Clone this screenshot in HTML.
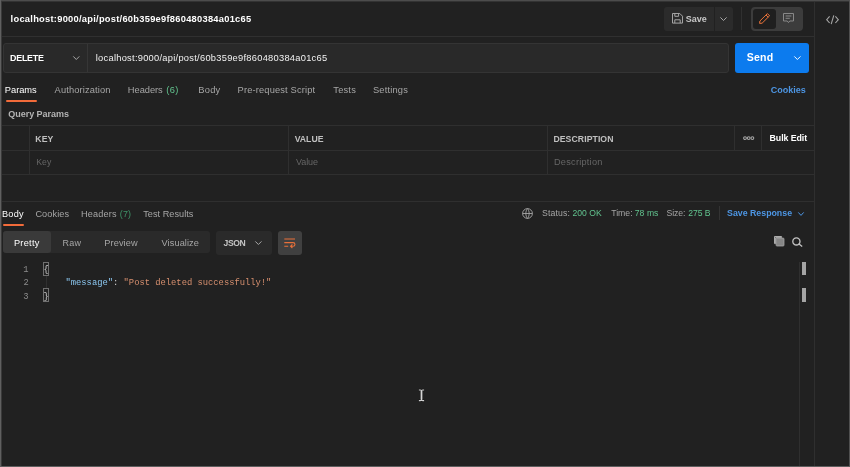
<!DOCTYPE html>
<html><head><meta charset="utf-8">
<style>
*{box-sizing:border-box;margin:0;padding:0}
html,body{width:850px;height:467px;overflow:hidden;background:#212121}
body{font-family:"Liberation Sans",sans-serif;font-size:9.5px;color:#a6a6a6;position:relative}
.abs{position:absolute}
.t{position:absolute;white-space:nowrap;line-height:12px}
.line{position:absolute;background:#2f2f2f}
svg{position:absolute;overflow:visible}
</style></head><body>
<!-- header -->
<div class="line" style="left:2px;top:35.5px;width:812px;height:1px;background:#303030"></div>
<!-- right sidebar -->
<div class="line" style="left:814px;top:1px;width:1px;height:465px"></div>
<svg style="left:826px;top:14.8px" width="13" height="9.4" viewBox="0 0 13 9.4" fill="none" stroke="#a6a6a6" stroke-width="1.1"><path d="M3.6 1.4 L0.7 4.7 L3.6 8 M9.4 1.4 L12.3 4.7 L9.4 8 M7.8 0.3 L5.2 9.1"/></svg>

<!-- save -->
<div class="abs" style="left:664px;top:7px;width:50px;height:23.5px;background:#2b2b2b;border-radius:3px 0 0 3px"></div>
<div class="abs" style="left:715px;top:7px;width:18px;height:23.5px;background:#2b2b2b;border-radius:0 3px 3px 0"></div>
<svg style="left:671.5px;top:13.4px" width="11" height="10.6" viewBox="0 0 11 10.6" fill="none" stroke="#a6a6a6" stroke-width="1"><path d="M0.5 0.5 H7.8 L10.5 3.2 V10.1 H0.5 Z M2.8 0.5 V3.3 H6.6 V0.5 M2.8 10.1 V6.8 H8.2 V10.1"/></svg>
<svg style="left:720.2px;top:17px" width="7" height="4" viewBox="0 0 7 4" fill="none" stroke="#a6a6a6" stroke-width="1"><path d="M0.4 0.4 L3.5 3.5 L6.6 0.4"/></svg>
<div class="line" style="left:741px;top:7px;width:1px;height:23px;background:#303030"></div>
<!-- toggle -->
<div class="abs" style="left:751px;top:7px;width:52px;height:24px;background:#3c3c3c;border-radius:4px"></div>
<div class="abs" style="left:753px;top:9px;width:23px;height:20px;background:#1f1f1f;border-radius:3px"></div>
<svg style="left:758.8px;top:13px" width="11.2" height="11" viewBox="0 0 11.2 11" fill="none" stroke="#ea7239" stroke-width="1"><path d="M0.6 10.4 L0.9 8 L8.4 0.6 L10.6 2.8 L3.1 10.2 Z M7 2 L9.2 4.2"/></svg>
<svg style="left:783px;top:13.3px" width="11" height="10.2" viewBox="0 0 11 10.2" fill="none" stroke="#8a8a8a" stroke-width="1"><path d="M0.5 0.5 H10.5 V8 H6.8 L5.5 9.6 L4.2 8 H0.5 Z M2.6 3 H8.4 M2.6 5.3 H6.8"/></svg>

<!-- url bar -->
<div class="abs" style="left:2.5px;top:43px;width:726.5px;height:29.5px;background:#292929;border:1px solid #343434;border-radius:3px"></div>
<div class="line" style="left:87px;top:44px;width:1px;height:27.5px;background:#363636"></div>
<svg style="left:73px;top:56px" width="6.6" height="4" viewBox="0 0 6.6 4" fill="none" stroke="#a6a6a6" stroke-width="1"><path d="M0.3 0.4 L3.3 3.5 L6.3 0.4"/></svg>
<!-- send -->
<div class="abs" style="left:735px;top:43px;width:73.5px;height:29.8px;background:#0c7bee;border-radius:3px"></div>
<svg style="left:793.5px;top:55.6px" width="6.8" height="4" viewBox="0 0 6.8 4" fill="none" stroke="#fff" stroke-width="0.95"><path d="M0.3 0.4 L3.4 3.5 L6.5 0.4"/></svg>

<!-- request tabs underline -->
<div class="abs" style="left:5.5px;top:100px;width:31.5px;height:2px;background:#f26b3a;border-radius:1px"></div>

<!-- table -->
<div class="line" style="left:2px;top:125.3px;width:812px;height:1px"></div>
<div class="line" style="left:2px;top:150px;width:812px;height:1px"></div>
<div class="line" style="left:2px;top:174.3px;width:812px;height:1px"></div>
<div class="line" style="left:29px;top:126px;width:1px;height:48px"></div>
<div class="line" style="left:288px;top:126px;width:1px;height:48px"></div>
<div class="line" style="left:547px;top:126px;width:1px;height:48px"></div>
<div class="line" style="left:734.2px;top:126px;width:1px;height:24px"></div>
<div class="line" style="left:761px;top:126px;width:1px;height:24px"></div>
<svg style="left:742.9px;top:136.2px" width="11.4" height="4.2" viewBox="0 0 11.4 4.2" fill="none" stroke="#a6a6a6" stroke-width="1.1"><circle cx="2" cy="2.1" r="1.4"/><circle cx="5.7" cy="2.1" r="1.4"/><circle cx="9.4" cy="2.1" r="1.4"/></svg>

<!-- response -->
<div class="line" style="left:2px;top:200.7px;width:812px;height:1px"></div>
<div class="abs" style="left:2.5px;top:224px;width:21.2px;height:2px;background:#f26b3a;border-radius:1px"></div>

<svg style="left:522px;top:208px" width="11" height="11" viewBox="0 0 11 11" fill="none" stroke="#a6a6a6" stroke-width="0.9"><circle cx="5.5" cy="5.5" r="4.9"/><path d="M0.6 5.5 H10.4 M5.5 0.6 C3.3 3 3.3 8 5.5 10.4 M5.5 0.6 C7.7 3 7.7 8 5.5 10.4"/></svg>
<div class="line" style="left:719px;top:206.4px;width:1px;height:13.6px;background:#333"></div>
<svg style="left:798.4px;top:212px" width="6" height="4" viewBox="0 0 6 4" fill="none" stroke="#4d96e4" stroke-width="1"><path d="M0.3 0.4 L3 3.4 L5.7 0.4"/></svg>

<!-- view tabs -->
<div class="abs" style="left:2.5px;top:231px;width:207.5px;height:21.8px;background:#2a2a2a;border-radius:3px"></div>
<div class="abs" style="left:2.5px;top:231px;width:48.5px;height:21.8px;background:#3a3a3a;border-radius:3px"></div>
<div class="abs" style="left:216px;top:231px;width:56px;height:23.5px;background:#2a2a2a;border-radius:3px"></div>
<svg style="left:255.4px;top:241.4px" width="6.8" height="4" viewBox="0 0 6.8 4" fill="none" stroke="#a6a6a6" stroke-width="1"><path d="M0.3 0.4 L3.4 3.5 L6.5 0.4"/></svg>
<div class="abs" style="left:278px;top:231px;width:24px;height:23.5px;background:#404040;border-radius:3px"></div>
<svg style="left:284.4px;top:238px" width="11.6" height="10.3" viewBox="0 0 11.6 10.3" fill="none" stroke="#e8703a" stroke-width="1.1"><path d="M0.3 1 H11 M0.3 4.6 H9 C11.6 4.6 11.6 8.2 9 8.2 H7 M8.4 6.4 L6.6 8.2 L8.4 10 M0.3 8.2 H4.2"/></svg>

<svg style="left:774px;top:236px" width="10.4" height="10.4" viewBox="0 0 10.4 10.4"><path d="M0.5 0.5 H7.6 V1.6 H1.6 V7.6 H0.5 Z" fill="none" stroke="#b0b0b0" stroke-width="1"/><rect x="2.1" y="2.1" width="7.9" height="7.9" rx="0.8" fill="#868686" stroke="#a6a6a6" stroke-width="0.8"/></svg>
<svg style="left:791.6px;top:236.6px" width="10.8" height="10" viewBox="0 0 10.8 10" fill="none" stroke="#c4c4c4" stroke-width="1.3"><circle cx="4.4" cy="4.4" r="3.6"/><path d="M7 7 L10.2 9.6"/></svg>

<!-- code -->
<div class="abs" style="left:43.2px;top:261.8px;width:5.8px;height:14px;border:1px solid #707070"></div>
<div class="abs" style="left:43.2px;top:288.3px;width:5.8px;height:14px;border:1px solid #707070"></div>
<div class="line" style="left:45.6px;top:276px;width:1px;height:12px;background:#303030"></div>

<!-- scrollbar -->
<div class="line" style="left:798.6px;top:262px;width:1px;height:204px"></div>
<div class="abs" style="left:801.8px;top:262.2px;width:4.2px;height:12.8px;background:#a4a4a4"></div>
<div class="abs" style="left:801.8px;top:288px;width:4.2px;height:14px;background:#a4a4a4"></div>

<div style="position:absolute;left:0;top:0;width:850px;height:467px;will-change:transform">
<div class="t" style="left:10.61px;top:13.00px;font-size:9.3px;font-weight:bold;color:#ffffff;letter-spacing:0.268px">localhost:9000/api/post/60b359e9f860480384a01c65</div>
<div class="t" style="left:10.09px;top:52.00px;font-size:8.9px;font-weight:bold;color:#ffffff;letter-spacing:-0.235px">DELETE</div>
<div class="t" style="left:95.75px;top:52.00px;font-size:9.3px;color:#f2f2f2;letter-spacing:0.271px">localhost:9000/api/post/60b359e9f860480384a01c65</div>
<div class="t" style="left:685.63px;top:13.00px;font-size:9.0px;font-weight:bold;color:#c6c6c6;letter-spacing:0.003px">Save</div>
<div class="t" style="left:746.72px;top:51.00px;font-size:10.55px;font-weight:bold;color:#ffffff;letter-spacing:0.195px">Send</div>
<div class="t" style="left:4.87px;top:84.00px;font-size:9.3px;color:#ffffff;letter-spacing:-0.033px">Params</div>
<div class="t" style="left:54.60px;top:84.00px;font-size:9.3px;color:#a6a6a6;letter-spacing:0.135px">Authorization</div>
<div class="t" style="left:127.87px;top:84.00px;font-size:9.3px;color:#a6a6a6;letter-spacing:-0.044px">Headers</div>
<div class="t" style="left:166.18px;top:84.00px;font-size:9.3px;color:#62c48f;letter-spacing:0.423px">(6)</div>
<div class="t" style="left:198.37px;top:84.00px;font-size:9.3px;color:#a6a6a6;letter-spacing:0.211px">Body</div>
<div class="t" style="left:237.57px;top:84.00px;font-size:9.3px;color:#a6a6a6;letter-spacing:0.156px">Pre-request Script</div>
<div class="t" style="left:333.31px;top:84.00px;font-size:9.3px;color:#a6a6a6;letter-spacing:0.197px">Tests</div>
<div class="t" style="left:372.88px;top:84.00px;font-size:9.3px;color:#a6a6a6;letter-spacing:0.203px">Settings</div>
<div class="t" style="left:770.75px;top:84.00px;font-size:9.0px;font-weight:bold;color:#4d96e4;letter-spacing:-0.011px">Cookies</div>
<div class="t" style="left:8.28px;top:108.00px;font-size:9.0px;font-weight:bold;color:#b4b4b4;letter-spacing:-0.036px">Query Params</div>
<div class="t" style="left:35.31px;top:133.00px;font-size:8.7px;font-weight:bold;color:#c0c0c0;letter-spacing:0.061px">KEY</div>
<div class="t" style="left:294.69px;top:133.00px;font-size:8.7px;font-weight:bold;color:#c0c0c0;letter-spacing:-0.008px">VALUE</div>
<div class="t" style="left:553.41px;top:133.00px;font-size:8.7px;font-weight:bold;color:#c0c0c0;letter-spacing:0.068px">DESCRIPTION</div>
<div class="t" style="left:36.13px;top:156.00px;font-size:8.7px;color:#666666;letter-spacing:0.184px">Key</div>
<div class="t" style="left:295.98px;top:156.00px;font-size:9.0px;color:#666666;letter-spacing:-0.066px">Value</div>
<div class="t" style="left:553.99px;top:156.00px;font-size:9.2px;color:#666666;letter-spacing:0.240px">Description</div>
<div class="t" style="left:769.59px;top:132.00px;font-size:8.8px;font-weight:bold;color:#ffffff;letter-spacing:-0.074px">Bulk Edit</div>
<div class="t" style="left:1.89px;top:208.00px;font-size:9.15px;color:#ffffff;letter-spacing:0.326px">Body</div>
<div class="t" style="left:35.39px;top:208.00px;font-size:9.15px;color:#a6a6a6;letter-spacing:0.118px">Cookies</div>
<div class="t" style="left:80.99px;top:208.00px;font-size:9.15px;color:#a6a6a6;letter-spacing:0.179px">Headers</div>
<div class="t" style="left:119.80px;top:208.00px;font-size:9.0px;color:#3f9468;letter-spacing:0.152px">(7)</div>
<div class="t" style="left:143.21px;top:208.00px;font-size:9.15px;color:#a6a6a6;letter-spacing:0.043px">Test Results</div>
<div class="t" style="left:542.02px;top:207.00px;font-size:8.7px;color:#a6a6a6;letter-spacing:0.138px">Status:</div>
<div class="t" style="left:572.51px;top:207.00px;font-size:8.6px;color:#62c48f;letter-spacing:0.027px">200 OK</div>
<div class="t" style="left:611.23px;top:207.00px;font-size:8.7px;color:#a6a6a6;letter-spacing:-0.018px">Time:</div>
<div class="t" style="left:634.81px;top:207.00px;font-size:8.6px;color:#62c48f;letter-spacing:0.048px">78 ms</div>
<div class="t" style="left:666.42px;top:207.00px;font-size:8.7px;color:#a6a6a6;letter-spacing:-0.066px">Size:</div>
<div class="t" style="left:688.31px;top:207.00px;font-size:8.6px;color:#62c48f;letter-spacing:-0.076px">275 B</div>
<div class="t" style="left:727.04px;top:207.00px;font-size:8.8px;font-weight:bold;color:#4d96e4;letter-spacing:-0.003px">Save Response</div>
<div class="t" style="left:13.89px;top:237.00px;font-size:9.2px;color:#ffffff;letter-spacing:0.302px">Pretty</div>
<div class="t" style="left:62.61px;top:237.00px;font-size:9.0px;color:#a6a6a6;letter-spacing:0.199px">Raw</div>
<div class="t" style="left:104.19px;top:237.00px;font-size:9.2px;color:#a6a6a6;letter-spacing:0.132px">Preview</div>
<div class="t" style="left:161.57px;top:237.00px;font-size:9.2px;color:#a6a6a6;letter-spacing:0.091px">Visualize</div>
<div class="t" style="left:223.55px;top:237.00px;font-size:8.6px;font-weight:bold;color:#c6c6c6;letter-spacing:-0.416px">JSON</div>
<div class="t" style="left:23.27px;top:264.00px;font-size:8.8px;font-family:'Liberation Mono', monospace;color:#8c8c8c;letter-spacing:0.000px">1</div>
<div class="t" style="left:23.39px;top:277.00px;font-size:8.8px;font-family:'Liberation Mono', monospace;color:#8c8c8c;letter-spacing:0.000px">2</div>
<div class="t" style="left:23.30px;top:291.00px;font-size:8.8px;font-family:'Liberation Mono', monospace;color:#8c8c8c;letter-spacing:0.000px">3</div>
<div class="t" style="left:65.5px;top:277px;font-family:'Liberation Mono',monospace;font-size:8.8px;color:#d4d4d4"><span style="color:#8cc8f2">"message"</span>: <span style="color:#d8906f">"Post deleted successfully!"</span></div>
<div class="t" style="left:43.6px;top:264px;font-family:'Liberation Mono',monospace;font-size:8.8px;color:#d4d4d4">{</div>
<div class="t" style="left:43.6px;top:291px;font-family:'Liberation Mono',monospace;font-size:8.8px;color:#d4d4d4">}</div>
</div>

<!-- I-beam cursor -->
<svg style="left:418.2px;top:388.8px" width="7" height="12.6" viewBox="0 0 7 12.6" fill="none"><path d="M0.9 1 H2.3 Q3.5 1 3.5 2.2 V10.4 Q3.5 11.6 2.3 11.6 H0.9 M6.1 1 H4.7 Q3.5 1 3.5 2.2 M3.5 10.4 Q3.5 11.6 4.7 11.6 H6.1" stroke="#181818" stroke-width="2.6"/><path d="M0.9 1 H2.3 Q3.5 1 3.5 2.2 V10.4 Q3.5 11.6 2.3 11.6 H0.9 M6.1 1 H4.7 Q3.5 1 3.5 2.2 M3.5 10.4 Q3.5 11.6 4.7 11.6 H6.1" stroke="#cfcfcf" stroke-width="1.1"/><path d="M3.5 2 V10.6" stroke="#d6d6d6" stroke-width="1.7"/></svg>

<!-- frame edges -->
<div class="abs" style="left:0;top:0;width:850px;height:1px;background:#4c4c4c"></div>
<div class="abs" style="left:0;top:1px;width:850px;height:1px;background:#333"></div>
<div class="abs" style="left:0;top:0;width:1px;height:467px;background:#606060"></div>
<div class="abs" style="left:1px;top:1px;width:1px;height:465px;background:#3a3a3a"></div>
<div class="abs" style="left:849px;top:0;width:1px;height:467px;background:#505050"></div>
<div class="abs" style="left:0;top:465.5px;width:850px;height:1.5px;background:#5e5e5e"></div>
</body></html>
